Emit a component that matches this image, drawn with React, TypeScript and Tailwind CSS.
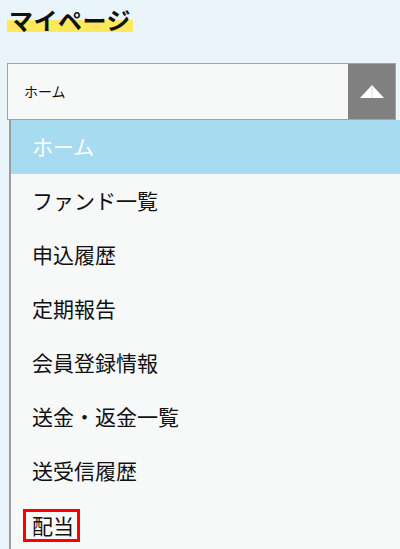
import React from "react";

const items = ["ファンド一覧", "申込履歴", "定期報告", "会員登録情報", "送金・返金一覧", "送受信履歴"];

export default function App() {
  return (
    <div
      className="w-[400px] h-[549px] overflow-hidden bg-[#e9f4fb] text-[#111]"
      style={{ fontFamily: '"Noto Sans CJK JP", "Noto Sans", sans-serif' }}
    >
      <div className="h-[63px] pl-[7px] pt-[7px]">
        <span className="inline-block px-[2px] text-[24px] leading-[25px] font-bold tracking-[0.5px] bg-[linear-gradient(transparent_52%,#fde95b_52%)]">
          マイページ
        </span>
      </div>
      <div className="ml-[7px] w-[389px] h-[57px] border border-[#a3a3a3] bg-[#f7f8f8] flex">
        <div className="flex-1 flex items-center pl-[16px] text-[14px]">ホーム</div>
        <div className="w-[47px] bg-[#808080] flex items-center justify-center">
          <svg width="24" height="13" viewBox="0 0 24 13">
            <polygon points="12,0 24,13 0,13" fill="#ffffff" />
            <line x1="12" y1="1" x2="12" y2="13" stroke="#dcdcdc" strokeWidth="1" />
          </svg>
        </div>
      </div>
      <div className="ml-[9px] w-[400px] border-l-2 border-[#9c9c9c] bg-[#f7f8f8] text-[21px]">
        <div className="h-[54px] flex items-center pl-[21px] bg-[#a7dbf0] text-white">ホーム</div>
        {items.map((t) => (
          <div key={t} className="h-[54px] flex items-center pl-[21px]">
            {t}
          </div>
        ))}
        <div className="h-[54px] flex items-center pl-[21px]">
          <span className="relative leading-[21px]">
            配当
            <span className="absolute -left-[9px] -right-[6px] -top-[6px] -bottom-[6px] border-[3px] border-[#ff0000]" />
          </span>
        </div>
      </div>
    </div>
  );
}
